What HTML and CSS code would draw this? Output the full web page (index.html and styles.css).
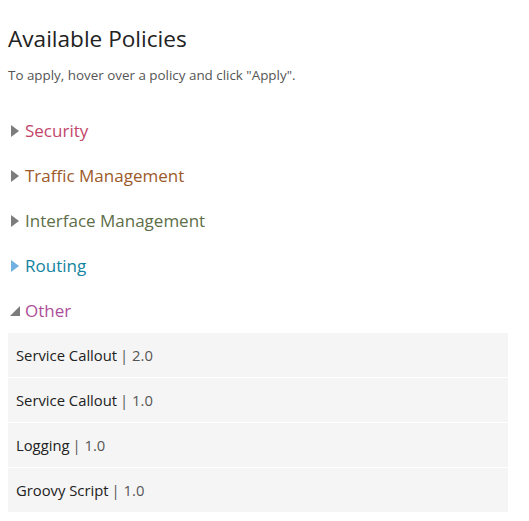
FILE: index.html
```html
<!DOCTYPE html>
<html>
<head>
<meta charset="utf-8">
<link rel="stylesheet" href="styles.css">
</head>
<body>
<div class="panel">
  <h1 class="title">Available Policies</h1>
  <p class="hint">To apply, hover over a policy and click "Apply".</p>
  <div class="cats">
    <div class="cat cat-security">
      <svg class="tri" width="10" height="12" viewBox="0 0 10 12"><polygon points="1,0 9,6 1,12" /></svg>
      <span>Security</span>
    </div>
    <div class="cat cat-traffic">
      <svg class="tri" width="10" height="12" viewBox="0 0 10 12"><polygon points="1,0 9,6 1,12" /></svg>
      <span>Traffic Management</span>
    </div>
    <div class="cat cat-interface">
      <svg class="tri" width="10" height="12" viewBox="0 0 10 12"><polygon points="1,0 9,6 1,12" /></svg>
      <span>Interface Management</span>
    </div>
    <div class="cat cat-routing">
      <svg class="tri tri-blue" width="10" height="12" viewBox="0 0 10 12"><polygon points="1,0 9,6 1,12" /></svg>
      <span>Routing</span>
    </div>
    <div class="cat cat-other">
      <svg class="tri" width="10" height="12" viewBox="0 0 10 12"><polygon points="0,11 10,11 10,1" /></svg>
      <span>Other</span>
    </div>
  </div>
  <ul class="policies">
    <li>Service Callout<span class="ver">| 2.0</span></li>
    <li>Service Callout<span class="ver">| 1.0</span></li>
    <li>Logging<span class="ver">| 1.0</span></li>
    <li>Groovy Script<span class="ver">| 1.0</span></li>
  </ul>
</div>
</body>
</html>
```
FILE: styles.css
```css
html, body {
  margin: 0;
  padding: 0;
  background: #fff;
}
body {
  font-family: "Open Sans", "Noto Sans", sans-serif;
  color: #333;
}
.panel {
  padding: 0 21px 0 8px;
}
.title {
  margin: 0;
  padding-top: 24px;
  font-size: 22.6px;
  font-weight: 400;
  line-height: 30px;
  color: #222;
}
.hint {
  margin: 11px 0 0;
  font-size: 13.4px;
  line-height: 20px;
  color: #555;
}
.cats {
  margin-top: 23px;
}
.cat {
  display: flex;
  align-items: center;
  height: 45px;
  font-size: 17px;
}
.tri {
  flex: none;
  margin: 0 5px 0 2px;
  fill: #7c7c7c;
}
.tri-blue {
  fill: #6fb1e0;
}
.cat-security { color: #c2466a; }
.cat-traffic { color: #9c5a2a; }
.cat-interface { color: #5d6e48; }
.cat-routing { color: #13849f; }
.cat-other { color: #ac4e9a; }
.policies {
  list-style: none;
  margin: 0;
  padding: 0;
  display: flex;
  flex-direction: column;
  gap: 1px;
}
.policies li {
  height: 44px;
  display: flex;
  align-items: center;
  padding-left: 8px;
  background: #f5f5f5;
  font-size: 14.8px;
  color: #222;
}
.ver {
  color: #555;
  margin-left: 3px;
}
```
